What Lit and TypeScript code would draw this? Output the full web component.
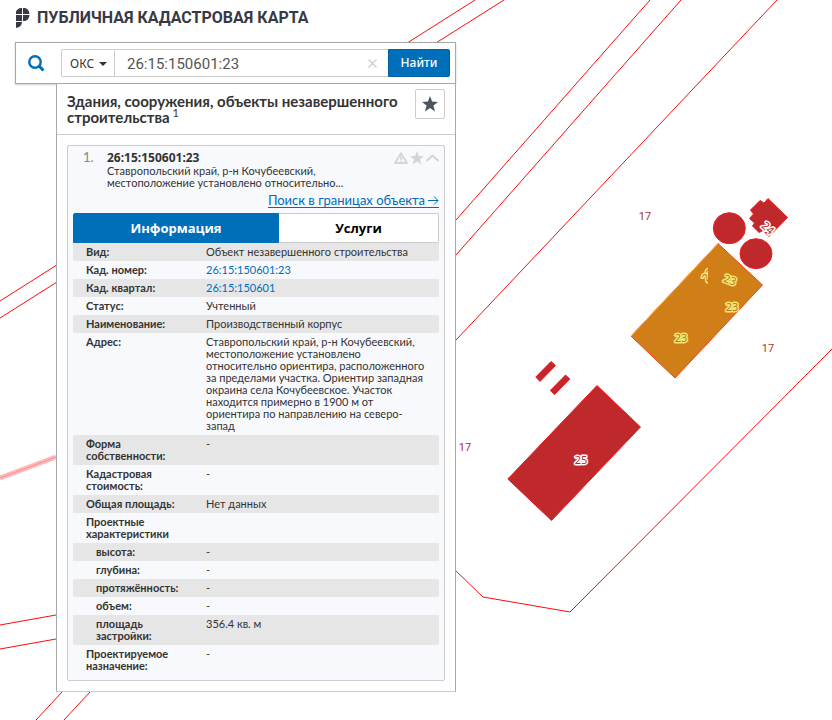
import { LitElement, html, css, svg, nothing } from 'lit';
import { customElement } from 'lit/decorators.js';
import { classMap } from 'lit/directives/class-map.js';

interface Row {
  label: string;
  value?: string;
  link?: boolean;
  sub?: boolean;
}

const ROWS: Row[] = [
  { label: 'Вид:', value: 'Объект незавершенного строительства' },
  { label: 'Кад. номер:', value: '26:15:150601:23', link: true },
  { label: 'Кад. квартал:', value: '26:15:150601', link: true },
  { label: 'Статус:', value: 'Учтенный' },
  { label: 'Наименование:', value: 'Производственный корпус' },
  {
    label: 'Адрес:',
    value:
      'Ставропольский край, р-н Кочубеевский, местоположение установлено относительно ориентира, расположенного за пределами участка. Ориентир западная окраина села Кочубеевское. Участок находится примерно в 1900 м от ориентира по направлению на северо-запад',
  },
  { label: 'Форма собственности:', value: '-' },
  { label: 'Кадастровая стоимость:', value: '-' },
  { label: 'Общая площадь:', value: 'Нет данных' },
  { label: 'Проектные характеристики' },
  { label: 'высота:', value: '-', sub: true },
  { label: 'глубина:', value: '-', sub: true },
  { label: 'протяжённость:', value: '-', sub: true },
  { label: 'объем:', value: '-', sub: true },
  { label: 'площадь застройки:', value: '356.4 кв. м', sub: true },
  { label: 'Проектируемое назначение:', value: '-' },
];

const STAR = 'M8 0 L10.1 5.6 L16 5.9 L11.4 9.6 L13 15.4 L8 12.1 L3 15.4 L4.6 9.6 L0 5.9 L5.9 5.6 Z';

@customElement('cadastral-map')
export class CadastralMap extends LitElement {
  static styles = css`
    :host {
      display: block;
    }
    svg {
      display: block;
      width: 100%;
      height: 100%;
      overflow: visible;
      font-family: 'Noto Sans', sans-serif;
    }
    .border {
      fill: none;
      stroke: #ff0a0a;
      stroke-width: 1;
    }
    .zone {
      stroke: #ffb9b9;
      stroke-width: 5;
    }
    .zone-axis {
      stroke: #ff8d8d;
      stroke-width: 1;
    }
    .building {
      fill: #c0292b;
      stroke: #f01c20;
      stroke-width: 1;
    }
    .selected {
      fill: #d07e18;
      stroke: #ff3b1c;
    }
    .highlight {
      fill: none;
      stroke: #ffc04a;
    }
    .plot {
      fill: #a83236;
      font-size: 11px;
      font-family: Roboto, sans-serif;
      text-anchor: middle;
    }
    .number {
      fill: #b8282c;
      stroke: #ffffff;
      stroke-width: 3px;
      stroke-linejoin: round;
      paint-order: stroke;
      font-size: 11px;
      text-anchor: middle;
    }
    .number.active {
      fill: #c07a18;
      stroke: #f2e673;
    }
  `;

  render() {
    return html`<svg aria-label="Карта">
      ${svg`
        <defs><clipPath id="tile"><rect x="690" y="260" width="18" height="30" /></clipPath></defs>
        <path class="border" d="M475 0 L0 301 M504 0 L0 318 M650 0 L456 220 M681 0 L456 255 M777 0 L456 340
          M456 571 L483 597 L570 612 L832 349 L1181 0 M0 625 L56 615 M0 649 L56 639 M62 692 L36 720 M90 692 L64 720" />
        <path class="zone" d="M0 478 L56 457" />
        <path class="zone-axis" d="M0 478 L56 457" />
        <path class="building" d="M597 385.500 L640.500 427 L551.500 520.500 L507.800 479 Z" />
        <path class="building" d="M551 361.500 L555.500 365.500 L540 381.500 L535.800 377 Z" />
        <path class="building" d="M565.500 375 L569.800 379 L554.500 394.500 L550.300 390.500 Z" />
        <ellipse class="building" cx="729.300" cy="228.200" rx="16" ry="15.500" />
        <ellipse class="building" cx="756" cy="253.700" rx="16" ry="15" />
        <path class="building" d="M768 198.500 L787.500 217.500 L769 236.500 L763 230.500 L759 232.500 L752.500 226 L754.500 223 L749.500 218.500 L753.500 214 L750.500 210 L760 200.500 L764 203 Z" />
        <path class="building selected" d="M718 243.500 L762.500 285 L675 378 L631 336 Z" />
        <path class="highlight" d="M631 336 L718 243.500" />
        <text class="plot" x="645" y="220">17</text>
        <text class="plot" x="768" y="352">17</text>
        <text class="plot" x="465" y="451">17</text>
        <text class="number" x="581" y="464">25</text>
        <text class="number" x="768" y="232" transform="rotate(42 768 228)">24</text>
        <text class="number active" x="681" y="342">23</text>
        <text class="number active" x="732" y="311">23</text>
        <text class="number active" x="730" y="284" transform="rotate(20 730 280)">23</text>
        <g clip-path="url(#tile)">
          <text class="number active" x="708" y="279" transform="rotate(-50 708 275)">23</text>
        </g>
      `}
    </svg>`;
  }
}

@customElement('app-root')
export class AppRoot extends LitElement {
  static styles = css`
    :host {
      display: block;
      position: relative;
      min-height: 100vh;
      box-sizing: border-box;
      overflow: hidden;
      padding: 8px 16px 28px 15px;
      background: #fff;
      color: #333;
      font-family: Lato, 'Noto Sans', sans-serif;
      font-size: 11px;
      line-height: 12px;
    }
    * {
      box-sizing: border-box;
    }
    button,
    input,
    select {
      font-family: inherit;
      color: inherit;
      margin: 0;
    }
    a {
      color: #006db8;
    }
    svg {
      display: block;
    }
    .map {
      position: absolute;
      inset: 0;
    }
    .page {
      position: relative;
      max-width: 441px;
    }
    .brand {
      display: flex;
      align-items: center;
      gap: 7px;
      height: 20px;
      margin-bottom: 14px;
      padding-left: 1px;
    }
    h1 {
      margin: 0;
      font: bold 16px/20px Roboto, sans-serif;
      color: #373a44;
      white-space: nowrap;
    }
    .search {
      display: flex;
      align-items: center;
      height: 42px;
      padding: 0 5px 0 0;
      border: 1px solid #a8a8a8;
      background: #fff;
      box-shadow: 0 1px 2px #cccccc;
    }
    .lens {
      flex: 0 0 45px;
      padding-left: 12px;
    }
    .field {
      display: flex;
      flex: 1;
      min-width: 0;
      height: 28px;
      border: 1px solid #ccc;
      border-right: 0;
      border-radius: 2px 0 0 2px;
    }
    .kind {
      position: relative;
      flex: 0 0 53px;
      border-right: 1px solid #ccc;
    }
    .kind::after {
      content: '';
      position: absolute;
      right: 7px;
      top: 12px;
      border: 4px solid transparent;
      border-top-color: #333;
      border-bottom: 0;
      pointer-events: none;
    }
    select {
      appearance: none;
      width: 100%;
      height: 100%;
      padding: 0 0 0 8px;
      border: 0;
      background: none;
      font-size: 12px;
      font-family: 'Noto Sans', sans-serif;
    }
    input {
      flex: 1;
      min-width: 0;
      padding: 2px 0 0 12px;
      border: 0;
      outline: 0;
      background: none;
      color: #555;
      font-size: 15px;
      font-family: Roboto, sans-serif;
    }
    .clear {
      display: grid;
      place-items: center;
      width: 32px;
      padding: 0;
      border: 0;
      background: none;
    }
    .find {
      width: 62px;
      height: 28px;
      padding: 0 0 1px;
      border: 1px solid #005fa3;
      border-radius: 0 2px 2px 0;
      background: #006fba;
      color: #fff;
      font-size: 12px;
      font-weight: 500;
      font-family: 'Noto Sans', sans-serif;
    }
    .panel {
      margin-left: 41px;
      border: 1px solid #a8a8a8;
      border-top: 0;
      border-bottom-color: #ccc;
      background: #fff;
    }
    .panel-head {
      display: flex;
      justify-content: space-between;
      align-items: flex-start;
      height: 51px;
      padding: 5px 10px 0;
      border-bottom: 1px solid #ccc;
    }
    h2 {
      margin: 0;
      padding-top: 4px;
      font-size: 15px;
      line-height: 16px;
    }
    sup {
      font-size: 11px;
      font-weight: normal;
      line-height: 1px;
    }
    .favourite {
      display: grid;
      place-items: center;
      flex: none;
      width: 30px;
      height: 30px;
      padding: 0;
      border: 1px solid #ccc;
      border-radius: 2px;
      background: #fff;
    }
    .card {
      margin: 10px;
      padding: 4px 5px 5px;
      border: 1px solid #ccc;
      border-radius: 2px;
      background: #f8f9fc;
    }
    .card-head {
      display: flex;
      padding: 0 0 0 10px;
    }
    .index {
      flex: 0 0 24px;
      color: #888;
      font-size: 13px;
      line-height: 15px;
    }
    .summary {
      flex: 1;
    }
    h3 {
      margin: 0;
      font: bold 12px/15px 'Noto Sans', sans-serif;
    }
    .summary p {
      margin: 0;
      max-width: 240px;
    }
    .marks {
      display: flex;
      gap: 2px;
      padding-top: 1px;
      height: 15px;
      align-items: center;
    }
    .within {
      margin: 3px 0 5px;
      text-align: right;
      font-size: 13px;
      line-height: 16px;
    }
    .within a {
      display: inline-flex;
      align-items: center;
      gap: 3px;
      border-bottom: 1px solid;
      line-height: 14px;
      text-decoration: none;
    }
    .tabs {
      display: flex;
      height: 30px;
    }
    .tabs button {
      flex: 0 0 206px;
      padding: 0;
      border: 1px solid #006fba;
      border-radius: 2px 0 0 0;
      background: #006fba;
      color: #fff;
      font: bold 13px/20px 'Open Sans', sans-serif;
    }
    .tabs button + button {
      flex: 1;
      border: 1px solid #ccc;
      border-left: 0;
      border-radius: 0 2px 2px 0;
      background: #fff;
      color: #000;
    }
    table {
      width: 100%;
      border-collapse: collapse;
      table-layout: fixed;
    }
    th,
    td {
      padding: 3px 10px 3px 0;
      text-align: left;
      vertical-align: top;
    }
    th {
      width: 133px;
      padding-left: 13px;
    }
    .sub th {
      padding-left: 23px;
    }
    tr:nth-child(odd) {
      background: #e6e6e6;
    }
    td a {
      text-decoration: none;
    }
  `;

  render() {
    return html`
      <cadastral-map class="map"></cadastral-map>
      <div class="page">
        <header class="brand">
          <svg width="14" height="20" viewBox="0 0 14 20" fill="#373a44" aria-hidden="true">
            <path d="M4 0 H6 V6 H0 V4 Q0 2 4 0 Z M7 0 H9 Q13 1 13.500 6 H7 Z M0 7 H6 V13 H0 Z M7 7 H13.500 Q13 12 9 13 H7 Z M0 14 H6 Q6 19 0 20 Z" />
          </svg>
          <h1>ПУБЛИЧНАЯ КАДАСТРОВАЯ КАРТА</h1>
        </header>

        <form class="search" @submit=${(e: Event) => e.preventDefault()}>
          <div class="lens">
            <svg width="17" height="17" viewBox="0 0 17 17" fill="none" stroke="#006fba" aria-hidden="true">
              <circle cx="7" cy="7" r="5.700" stroke-width="2.400" />
              <path d="M11 11 L15.500 15.500" stroke-width="3" />
            </svg>
          </div>
          <div class="field">
            <div class="kind">
              <select aria-label="Тип объекта">
                <option>ОКС</option>
              </select>
            </div>
            <input type="text" aria-label="Кадастровый номер" value="26:15:150601:23" />
            <button class="clear" type="button" aria-label="Очистить">
              <svg width="9" height="9" viewBox="0 0 9 9" stroke="#ccc" stroke-width="1.300">
                <path d="M0.500 0.500 L8.500 8.500 M8.500 0.500 L0.500 8.500" />
              </svg>
            </button>
          </div>
          <button class="find" type="submit">Найти</button>
        </form>

        <section class="panel">
          <div class="panel-head">
            <h2>Здания, сооружения, объекты незавершенного строительства<sup> 1</sup></h2>
            <button class="favourite" type="button" aria-label="В избранное">
              <svg width="16" height="16" viewBox="0 0 16 16" fill="#4b545f"><path d=${STAR} /></svg>
            </button>
          </div>

          <article class="card">
            <div class="card-head">
              <span class="index">1.</span>
              <div class="summary">
                <h3>26:15:150601:23</h3>
                <p>Ставропольский край, р-н Кочубеевский, местоположение установлено относительно...</p>
              </div>
              <div class="marks">
                <svg width="14" height="12" viewBox="0 0 14 12" fill="none" stroke="#d4d5d7">
                  <path d="M7 1.200 L13 11 H1 Z" stroke-width="1.800" stroke-linejoin="round" />
                  <path d="M7 4 V8 M7 8.700 V10" stroke-width="1.600" />
                </svg>
                <svg width="14" height="14" viewBox="0 0 16 16" fill="#d4d5d7"><path d=${STAR} /></svg>
                <svg width="13" height="8" viewBox="0 0 13 8" fill="none" stroke="#d4d5d7" stroke-width="2">
                  <path d="M0.500 7 L6.500 1.500 L12.500 7" />
                </svg>
              </div>
            </div>
            <div class="within">
              <a href="#within"
                >Поиск в границах объекта
                <svg width="11" height="9" viewBox="0 0 11 9" fill="none" stroke="currentColor">
                  <path d="M0 4.500 H10 M6 0.500 L10 4.500 L6 8.500" />
                </svg>
              </a>
            </div>
            <div class="tabs" role="tablist">
              <button type="button" role="tab" aria-selected="true">Информация</button>
              <button type="button" role="tab" aria-selected="false">Услуги</button>
            </div>
            <table>
              <tbody>
                ${ROWS.map(
                  (row) => html`<tr class=${classMap({ sub: !!row.sub })}>
                    <th scope="row">${row.label}</th>
                    <td>${row.link ? html`<a href="#object">${row.value}</a>` : row.value ?? nothing}</td>
                  </tr>`,
                )}
              </tbody>
            </table>
          </article>
        </section>
      </div>
    `;
  }
}
